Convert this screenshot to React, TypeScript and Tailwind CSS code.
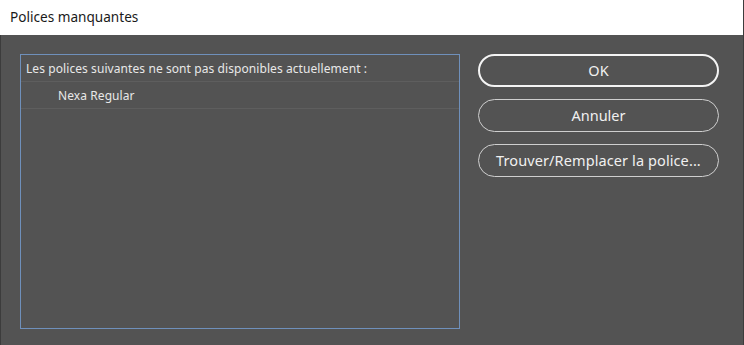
import React from "react";

export default function App() {
  const font = { fontFamily: '"Noto Sans", "Open Sans", sans-serif' };
  return (
    <div className="w-[744px] h-[345px] flex flex-col bg-[#535353] overflow-hidden" style={font}>
      <div className="h-[35px] shrink-0 bg-white flex items-center pl-[10px] border-r border-[#3c3c3c] text-[13.6px] text-[#1a1a1a]">
        Polices manquantes
      </div>
      <div className="flex-1 flex pt-[19px] pl-[19px] border-l border-r border-[#3c3c3c]">
        <div className="w-[440px] h-[275px] border border-[#6f90bb] flex flex-col">
          <div className="h-[27px] flex items-center pt-[2px] pl-[5px] border-b border-[#5e5e5e] text-[12px] tracking-[0.08px] text-[#e8e8e8]">
            Les polices suivantes ne sont pas disponibles actuellement :
          </div>
          <div className="h-[27px] flex items-center pt-[2px] pl-[37px] border-b border-[#5e5e5e] text-[12px] tracking-[0.08px] text-[#e8e8e8]">
            Nexa Regular
          </div>
        </div>
        <div className="ml-[18px] w-[241px] flex flex-col gap-[12px]">
          <div className="h-[33px] rounded-full border-2 border-[#f4f4f4] flex items-center justify-center text-[14.5px] text-[#f0f0f0]">
            OK
          </div>
          <div className="h-[33px] rounded-full border border-[#cfcfcf] flex items-center justify-center text-[14.5px] text-[#f0f0f0]">
            Annuler
          </div>
          <div className="h-[33px] rounded-full border border-[#cfcfcf] flex items-center justify-center text-[14.5px] tracking-[0.1px] text-[#f0f0f0]">
            Trouver/Remplacer la police...
          </div>
        </div>
      </div>
    </div>
  );
}
